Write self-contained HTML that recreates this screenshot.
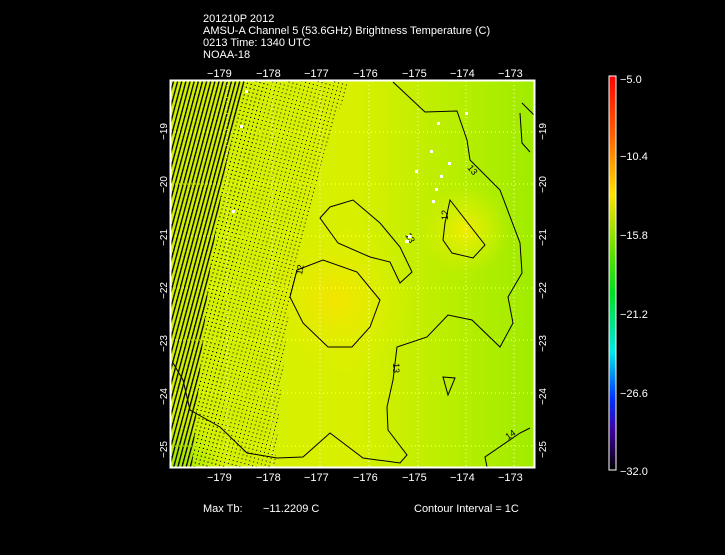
<!DOCTYPE html>
<html><head><style>
body{margin:0;background:#000;width:725px;height:550px;overflow:hidden}
svg text{font-family:"Liberation Sans",sans-serif;fill:#fff}
svg text.k{fill:#000}
</style></head><body>
<svg width="725" height="550" xmlns="http://www.w3.org/2000/svg">
<defs>
<radialGradient id="g1" cx="335" cy="300" r="80" gradientUnits="userSpaceOnUse"><stop offset="0" stop-color="#f4e400"/><stop offset="1" stop-color="#e0f000" stop-opacity="0"/></radialGradient>
<radialGradient id="g2" cx="465" cy="230" r="45" gradientUnits="userSpaceOnUse"><stop offset="0" stop-color="#f0ec00"/><stop offset="1" stop-color="#e0f000" stop-opacity="0"/></radialGradient>
<radialGradient id="g3" cx="175" cy="465" r="45" gradientUnits="userSpaceOnUse"><stop offset="0" stop-color="#a0e800"/><stop offset="1" stop-color="#a0e800" stop-opacity="0"/></radialGradient>
<linearGradient id="bg" x1="0" x2="1" y1="0" y2="0"><stop offset="0" stop-color="#d0f000"/><stop offset="0.5" stop-color="#d8f000"/><stop offset="1" stop-color="#a0ec00"/></linearGradient>
<linearGradient id="cb" x1="0" x2="0" y1="0" y2="1"><stop offset="0" stop-color="#ff0000"/><stop offset="0.15" stop-color="#ff6000"/><stop offset="0.3" stop-color="#ffe000"/><stop offset="0.45" stop-color="#60e000"/><stop offset="0.55" stop-color="#00e020"/><stop offset="0.7" stop-color="#00e8e8"/><stop offset="0.82" stop-color="#0030ff"/><stop offset="0.9" stop-color="#4000a0"/><stop offset="1" stop-color="#000000"/></linearGradient>
<pattern id="h1" width="4" height="4" patternUnits="userSpaceOnUse" patternTransform="rotate(15)"><rect width="1.3" height="4" fill="#000"/></pattern>
<pattern id="h2" width="4" height="4" patternUnits="userSpaceOnUse" patternTransform="rotate(15)"><rect width="1" height="1" fill="#000"/></pattern>
<clipPath id="pc"><rect x="171" y="81" width="363" height="386"/></clipPath>
</defs>
<text x="203" y="22" font-size="11">201210P 2012</text>
<text x="203" y="34" font-size="11">AMSU-A Channel 5 (53.6GHz) Brightness Temperature (C)</text>
<text x="203" y="46" font-size="11">0213 Time: 1340 UTC</text>
<text x="203" y="58" font-size="11">NOAA-18</text>
<g clip-path="url(#pc)">
<rect x="170" y="80" width="365" height="388" fill="url(#bg)"/>
<rect x="170" y="80" width="365" height="388" fill="url(#g1)"/>
<rect x="170" y="80" width="365" height="388" fill="url(#g2)"/>
<rect x="170" y="80" width="365" height="388" fill="url(#g3)"/>
<polygon points="170,80 350,80 325,150 305,230 290,300 280,400 275,467 170,467" fill="url(#h2)"/>
<polygon points="170,80 268,80 250,170 235,260 225,360 218,467 170,467" fill="url(#h2)"/>
<polygon points="170,80 245,80 225,170 210,270 200,370 192,467 170,467" fill="url(#h1)"/>
<g stroke="#fff" stroke-width="1" stroke-dasharray="1,3" opacity="0.9">
<line x1="227" y1="81" x2="227" y2="467"/><line x1="272" y1="81" x2="272" y2="467"/><line x1="320" y1="81" x2="320" y2="467"/><line x1="369" y1="81" x2="369" y2="467"/><line x1="418" y1="81" x2="418" y2="467"/><line x1="466" y1="81" x2="466" y2="467"/><line x1="514" y1="81" x2="514" y2="467"/>
<line x1="171" y1="132" x2="534" y2="132"/><line x1="171" y1="184" x2="534" y2="184"/><line x1="171" y1="236" x2="534" y2="236"/><line x1="171" y1="288" x2="534" y2="288"/><line x1="171" y1="340" x2="534" y2="340"/><line x1="171" y1="393" x2="534" y2="393"/><line x1="171" y1="446" x2="534" y2="446"/>
</g>
<g fill="none" stroke="#000" stroke-width="1">
<polyline points="393,82 425,112 457,111 467,140 470,160 500,190 520,243 522,273 508,297 513,323 500,347 472,320 448,315 427,337 397,347 393,380 387,407 388,430 407,455 400,463 363,458 330,433 303,457 277,458 247,453 220,427 190,410 183,380 173,363"/>
<polygon points="297,270 323,260 357,272 380,300 370,327 352,347 328,347 303,323 290,297"/>
<polygon points="320,218 330,207 353,200 380,223 400,247 412,272 400,283 390,262 370,257 338,243"/>
<polygon points="450,200 485,245 473,258 452,253 443,240 445,223"/>
<polygon points="443,377 455,378 448,395"/>
<polyline points="487,467 485,457 520,433 530,428"/>
<polyline points="520,113 522,143 530,152"/>
<polyline points="522,103 534,115"/>
</g>
<g font-size="9"><text class="k" transform="translate(467,168) rotate(50)">13</text><text class="k" transform="translate(448,220) rotate(-90)">12</text><text class="k" transform="translate(393,363) rotate(90)">13</text><text class="k" transform="translate(508,440) rotate(-35)">14</text><text class="k" transform="translate(302,275) rotate(-80)">12</text><text class="k" transform="translate(405,235) rotate(60)">13</text></g>
<g fill="#fff"><rect x="430" y="150" width="3" height="3"/><rect x="440" y="175" width="3" height="3"/><rect x="432" y="200" width="3" height="3"/><rect x="405" y="240" width="4" height="3"/><rect x="415" y="170" width="3" height="3"/><rect x="448" y="162" width="3" height="3"/><rect x="435" y="188" width="3" height="3"/><rect x="437" y="122" width="3" height="3"/><rect x="465" y="112" width="3" height="3"/><rect x="240" y="125" width="3" height="3"/><rect x="245" y="90" width="3" height="3"/><rect x="232" y="210" width="3" height="3"/><rect x="408" y="235" width="3" height="3"/></g>
</g>
<rect x="170.5" y="80.5" width="364" height="387" fill="none" stroke="#fff" stroke-width="2"/>
<g font-size="11">
<text x="207" y="77">−179</text><text x="256" y="77">−178</text><text x="304" y="77">−177</text><text x="353" y="77">−176</text><text x="402" y="77">−175</text><text x="450" y="77">−174</text><text x="498" y="77">−173</text>
<text x="207" y="481">−179</text><text x="256" y="481">−178</text><text x="304" y="481">−177</text><text x="353" y="481">−176</text><text x="402" y="481">−175</text><text x="450" y="481">−174</text><text x="498" y="481">−173</text>
<text x="203" y="512">Max Tb:</text><text x="263" y="512">−11.2209  C</text><text x="414" y="512">Contour Interval = 1C</text>
<text x="620" y="83">−5.0</text><text x="620" y="160">−10.4</text><text x="620" y="239">−15.8</text><text x="620" y="318">−21.2</text><text x="620" y="397">−26.6</text><text x="620" y="475">−32.0</text>
</g>
<g font-size="10">
<text transform="translate(167,140) rotate(-90)">−19</text><text transform="translate(167,193) rotate(-90)">−20</text><text transform="translate(167,246) rotate(-90)">−21</text><text transform="translate(167,299) rotate(-90)">−22</text><text transform="translate(167,352) rotate(-90)">−23</text><text transform="translate(167,405) rotate(-90)">−24</text><text transform="translate(167,458) rotate(-90)">−25</text>
<text transform="translate(546,140) rotate(-90)">−19</text><text transform="translate(546,193) rotate(-90)">−20</text><text transform="translate(546,246) rotate(-90)">−21</text><text transform="translate(546,299) rotate(-90)">−22</text><text transform="translate(546,352) rotate(-90)">−23</text><text transform="translate(546,405) rotate(-90)">−24</text><text transform="translate(546,458) rotate(-90)">−25</text>
</g>
<rect x="609" y="76" width="7" height="394" fill="url(#cb)" stroke="#fff" stroke-width="1"/>
</svg>
</body></html>
